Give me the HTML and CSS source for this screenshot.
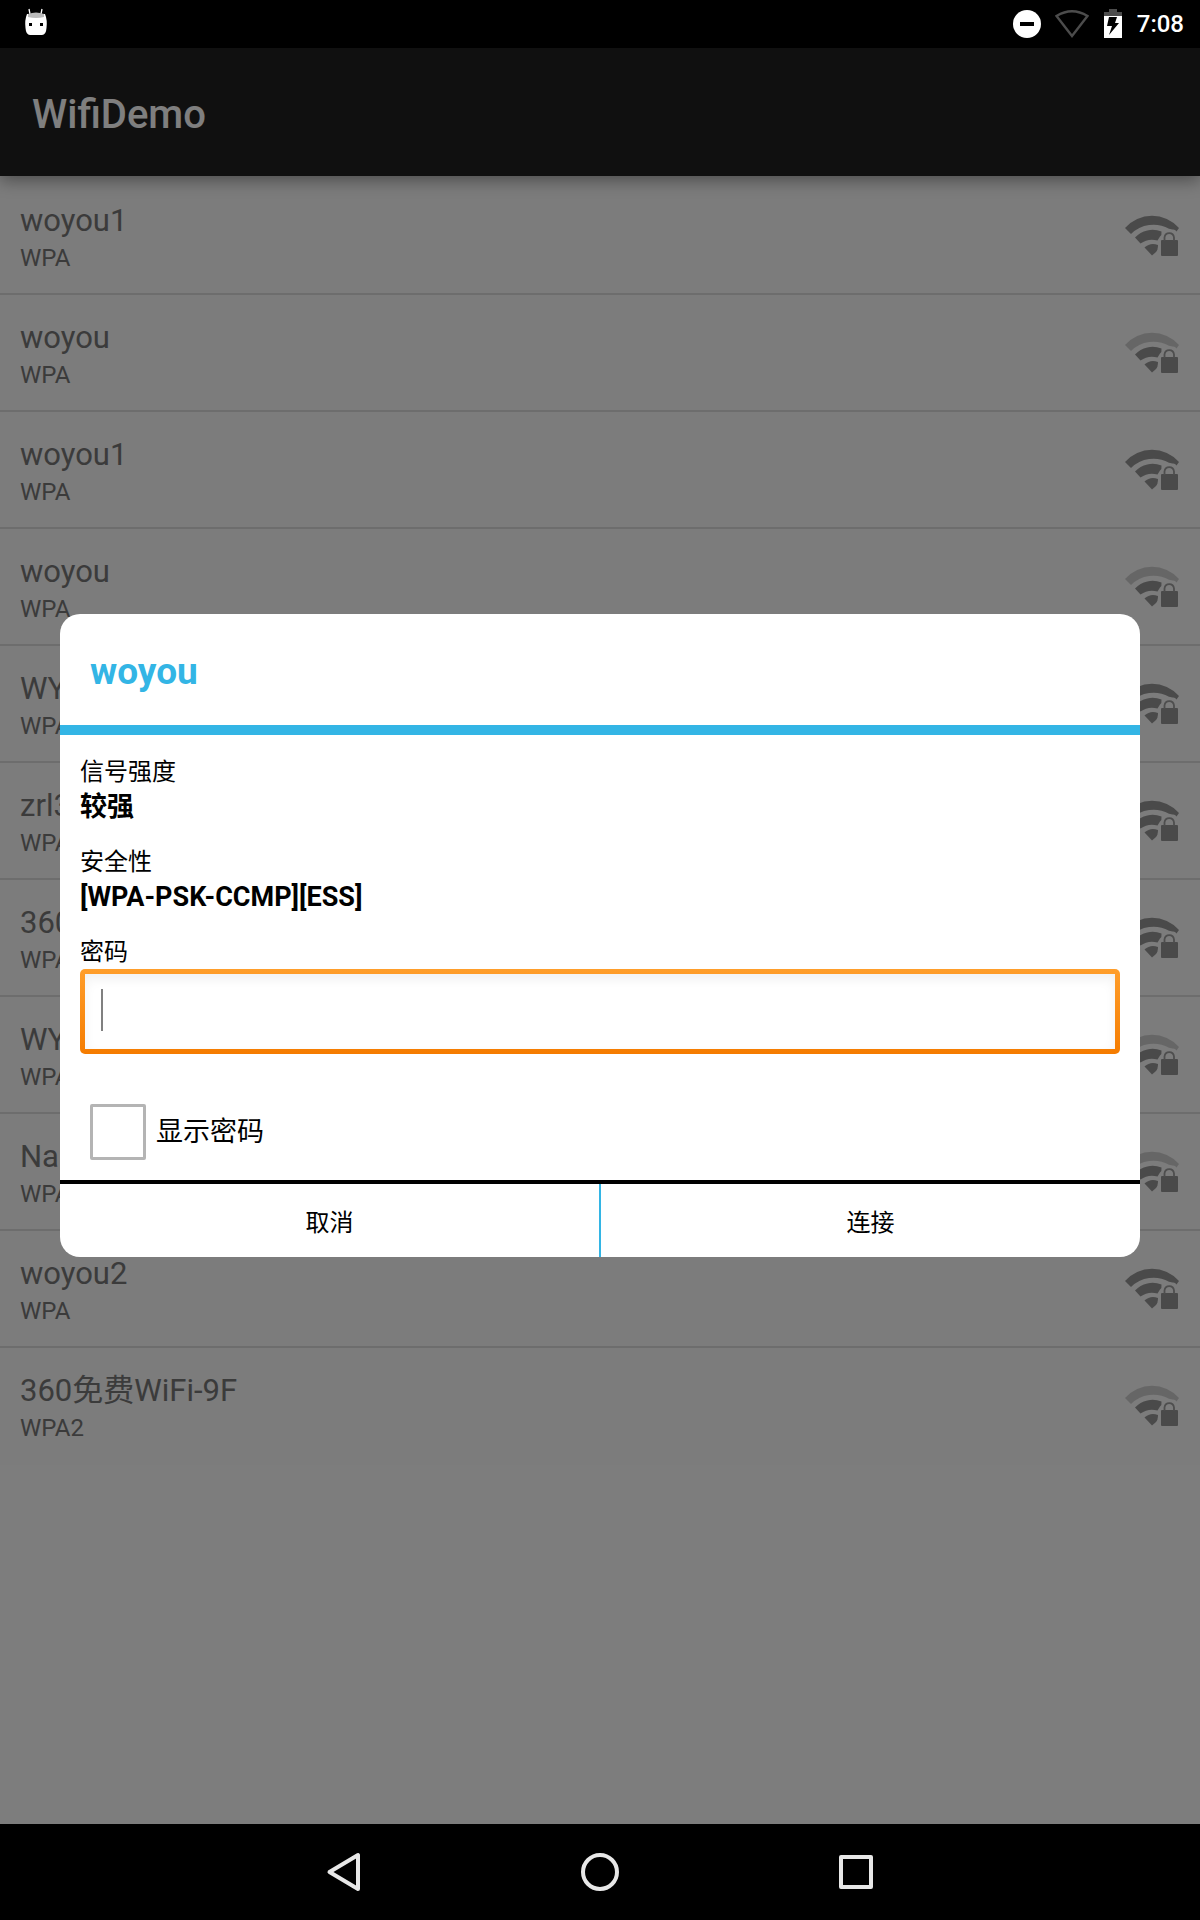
FILE: index.html
```html
<!DOCTYPE html>
<html lang="zh-CN">
<head>
  <meta charset="UTF-8" />
  <meta name="viewport" content="width=device-width, initial-scale=1.0"/>
  <title>WifiDemo</title>
  <link rel="stylesheet" href="styles.css">
</head>
<body>
  <!-- shared wifi signal icons -->
  <svg class="sprite" width="0" height="0" aria-hidden="true">
    <symbol id="wifi-core" viewBox="0 0 56 44">
      <path d="M11 23.500 A24 24 0 0 1 37.500 17.500 Q38 21 36 22.500 L33.500 26.500 A20 20 0 0 0 16.500 29.500 Z"/>
      <path d="M20.500 33.500 A13 13 0 0 1 34 31 Q34 36 32 38 L28 41.500 Z"/>
      <rect x="37" y="26" width="17" height="16" rx="1"/>
      <path d="M40.500 27 V23.500 A4.800 5 0 0 1 50 23.500 V27" fill="none" stroke="#9c9c9c" stroke-width="1.800"/>
    </symbol>
    <symbol id="wifi-arc" viewBox="0 0 56 44">
      <path d="M1 14 A36 36 0 0 1 55 14 L52.500 17.500 Q51 15 48.500 15.500 L45 14.700 A32 32 0 0 0 7 20 Z"/>
    </symbol>
  </svg>

  <div class="screen">
    <div class="status-bar">
      <svg class="icon-droid" width="24" height="28" viewBox="0 0 24 28">
        <path d="M6 6 L5 1 M17 6 L18 1" stroke="#fff" stroke-width="1.300"/>
        <path d="M3 6 H21 Q23.500 12 22.500 20 Q22 27 18 27 H6 Q2 27 1.500 20 Q.5 12 3 6 Z" fill="#fff"/>
        <path d="M4 6 Q12 3 20 6 V9 Q12 11 4 9 Z" fill="#bbb"/>
        <rect x="5" y="15" width="3" height="3" fill="#000"/>
        <rect x="16" y="15" width="3" height="3" fill="#000"/>
      </svg>
      <div class="status-icons">
        <svg width="28" height="28" viewBox="0 0 28 28">
          <circle cx="14" cy="14" r="14" fill="#fff"/>
          <rect x="7" y="12" width="14" height="4" fill="#000"/>
        </svg>
        <svg class="icon-signal" width="34" height="28" viewBox="0 0 34 28">
          <path d="M1.500 6 Q17 -3.500 32.500 6 L17 26 Z" fill="none" stroke="#4c4c4c" stroke-width="2.400"/>
        </svg>
        <svg class="icon-battery" width="20" height="30" viewBox="0 0 20 30">
          <path d="M1 3 H6 V0 H14 V3 H19 V7 H1 Z" fill="#4c4c4c"/>
          <rect x="1" y="7" width="18" height="22" fill="#fff"/>
          <path d="M6 8 H14 L12 14 H16 L6 26 L9 17 H4 Z" fill="#000"/>
        </svg>
        <span class="clock">7:08</span>
      </div>
    </div>

    <div class="app">
      <header class="app-bar">
        <h1>WifiDemo</h1>
      </header>

      <ul class="wifi-list">
        <li class="network">
          <div><div class="ssid">woyou1</div><div class="security">WPA</div></div>
          <svg class="signal"><use href="#wifi-arc"/><use href="#wifi-core"/></svg>
        </li>
        <li class="network">
          <div><div class="ssid">woyou</div><div class="security">WPA</div></div>
          <svg class="signal"><use class="weak" href="#wifi-arc"/><use href="#wifi-core"/></svg>
        </li>
        <li class="network">
          <div><div class="ssid">woyou1</div><div class="security">WPA</div></div>
          <svg class="signal"><use href="#wifi-arc"/><use href="#wifi-core"/></svg>
        </li>
        <li class="network">
          <div><div class="ssid">woyou</div><div class="security">WPA</div></div>
          <svg class="signal"><use class="weak" href="#wifi-arc"/><use href="#wifi-core"/></svg>
        </li>
        <li class="network">
          <div><div class="ssid">WY</div><div class="security">WPA</div></div>
          <svg class="signal"><use href="#wifi-arc"/><use href="#wifi-core"/></svg>
        </li>
        <li class="network">
          <div><div class="ssid">zrl3</div><div class="security">WPA</div></div>
          <svg class="signal"><use href="#wifi-arc"/><use href="#wifi-core"/></svg>
        </li>
        <li class="network">
          <div><div class="ssid">360</div><div class="security">WPA</div></div>
          <svg class="signal"><use href="#wifi-arc"/><use href="#wifi-core"/></svg>
        </li>
        <li class="network">
          <div><div class="ssid">WY</div><div class="security">WPA</div></div>
          <svg class="signal"><use class="weak" href="#wifi-arc"/><use href="#wifi-core"/></svg>
        </li>
        <li class="network">
          <div><div class="ssid">Na</div><div class="security">WPA</div></div>
          <svg class="signal"><use class="weak" href="#wifi-arc"/><use href="#wifi-core"/></svg>
        </li>
        <li class="network">
          <div><div class="ssid">woyou2</div><div class="security">WPA</div></div>
          <svg class="signal"><use href="#wifi-arc"/><use href="#wifi-core"/></svg>
        </li>
        <li class="network">
          <div><div class="ssid">360免费WiFi-9F</div><div class="security">WPA2</div></div>
          <svg class="signal"><use class="weak" href="#wifi-arc"/><use href="#wifi-core"/></svg>
        </li>
      </ul>

      <div class="overlay">
        <form class="dialog" role="dialog" aria-labelledby="dialogTitle">
          <h2 id="dialogTitle">woyou</h2>
          <div class="dialog-body">
            <div class="field">
              <div class="label">信号强度</div>
              <div class="value">较强</div>
            </div>
            <div class="field">
              <div class="label">安全性</div>
              <div class="value">[WPA-PSK-CCMP][ESS]</div>
            </div>
            <label class="label" for="password">密码</label>
            <div class="password-box">
              <input type="password" id="password" />
            </div>
            <div class="show-password">
              <input type="checkbox" id="showPassword" />
              <label for="showPassword">显示密码</label>
            </div>
          </div>
          <div class="dialog-buttons">
            <button type="button">取消</button>
            <button type="button">连接</button>
          </div>
        </form>
      </div>
    </div>

    <nav class="nav-bar">
      <button type="button" aria-label="Back">
        <svg width="40" height="40" viewBox="0 0 40 40"><path d="M34 3 V37 L5.500 20 Z"/></svg>
      </button>
      <button type="button" aria-label="Home">
        <svg width="40" height="40" viewBox="0 0 40 40"><circle cx="20" cy="20" r="17"/></svg>
      </button>
      <button type="button" aria-label="Recent apps">
        <svg width="40" height="40" viewBox="0 0 40 40"><rect x="5" y="5" width="30" height="30"/></svg>
      </button>
    </nav>
  </div>
</body>
</html>
```
FILE: styles.css
```css
* {
  box-sizing: border-box;
}

body {
  font-family: Roboto, "Noto Sans CJK SC", sans-serif;
  margin: 0;
  background: #000;
}

h1, h2, ul {
  margin: 0;
  padding: 0;
}

button {
  font-family: inherit;
  background: none;
  border: none;
  padding: 0;
  cursor: pointer;
}

.sprite {
  position: absolute;
}

.screen {
  min-height: 100vh;
  display: flex;
  flex-direction: column;
}

/* Status bar */
.status-bar {
  height: 48px;
  padding: 0 16px 0 24px;
  display: flex;
  justify-content: space-between;
  align-items: center;
  background: #000;
}

.icon-droid {
  margin-bottom: 4px;
}

.status-icons {
  display: flex;
  align-items: center;
  gap: 14px;
}

.clock {
  color: #fff;
  font-size: 24px;
  font-weight: 500;
}

/* App */
.app {
  flex: 1;
  position: relative;
  background: #fafafa;
}

.app-bar {
  height: 128px;
  padding: 4px 32px 0;
  display: flex;
  align-items: center;
  position: relative;
  background: #212121;
  box-shadow: 0 4px 16px rgba(0,0,0,0.4);
}

.app-bar h1 {
  color: #fff;
  font-size: 40px;
  font-weight: 500;
}

.wifi-list {
  list-style: none;
  padding-top: 2px;
  background: #f8f8f8;
}

.network {
  height: 117px;
  padding: 0 20px;
  display: flex;
  justify-content: space-between;
  align-items: center;
  border-bottom: 2px solid #dadada;
  color: #767676;
}

.network:last-child {
  border-bottom-color: transparent;
}

.ssid {
  padding-top: 4px;
  font-size: 31px;
  line-height: 40px;
}

.security {
  font-size: 24px;
  line-height: 34px;
}

.signal {
  width: 56px;
  height: 44px;
  fill: #949494;
}

.weak {
  fill: #cdcdcd;
}

/* Dialog */
.overlay {
  position: absolute;
  inset: 0;
  padding: 0 60px 2px;
  display: flex;
  align-items: center;
  background: rgba(0,0,0,0.5);
}

.dialog {
  width: 100%;
  background: #fff;
  border-radius: 20px;
  overflow: hidden;
  color: #000;
}

.dialog h2 {
  padding: 34px 30px 30px;
  border-bottom: 10px solid #33b5e5;
  color: #33b5e5;
  font-size: 37px;
  line-height: 47px;
}

.dialog-body {
  padding: 20px;
}

.field {
  margin-bottom: 20px;
}

.label {
  display: block;
  font-size: 24px;
  line-height: 34px;
}

.value {
  font-size: 27px;
  font-weight: 700;
  line-height: 36px;
}

.password-box {
  padding: 5px;
  border-radius: 5px;
  background: linear-gradient(#ff9e2b, #f57c00);
}

.password-box input {
  display: block;
  width: 100%;
  height: 75px;
  padding: 0 16px;
  border: none;
  outline: none;
  font-size: 36px;
  /* thin text cursor */
  background: linear-gradient(#808080, #808080) 16px 15px / 2px 42px no-repeat #fff;
  box-shadow: inset 0 5px 12px rgba(0,0,0,0.06);
}

.show-password {
  display: flex;
  align-items: center;
  gap: 10px;
  margin: 50px 0 0 10px;
  font-size: 27px;
}

.show-password label {
  padding-bottom: 4px;
}

.show-password input {
  appearance: none;
  width: 56px;
  height: 56px;
  margin: 0;
  border: 3px solid #b4b4b4;
  border-radius: 2px;
}

.dialog-buttons {
  display: flex;
  border-top: 4px solid #000;
}

.dialog-buttons button {
  flex: 1;
  height: 73px;
  color: #000;
  font-size: 24px;
}

.dialog-buttons button + button {
  border-left: 2px solid #33b5e5;
}

/* Navigation bar */
.nav-bar {
  height: 96px;
  display: flex;
  justify-content: center;
  background: #000;
}

.nav-bar button {
  width: 256px;
}

.nav-bar svg {
  display: block;
  margin: auto;
  fill: none;
  stroke: #e8e8e8;
  stroke-width: 4;
  stroke-linejoin: round;
}
```
